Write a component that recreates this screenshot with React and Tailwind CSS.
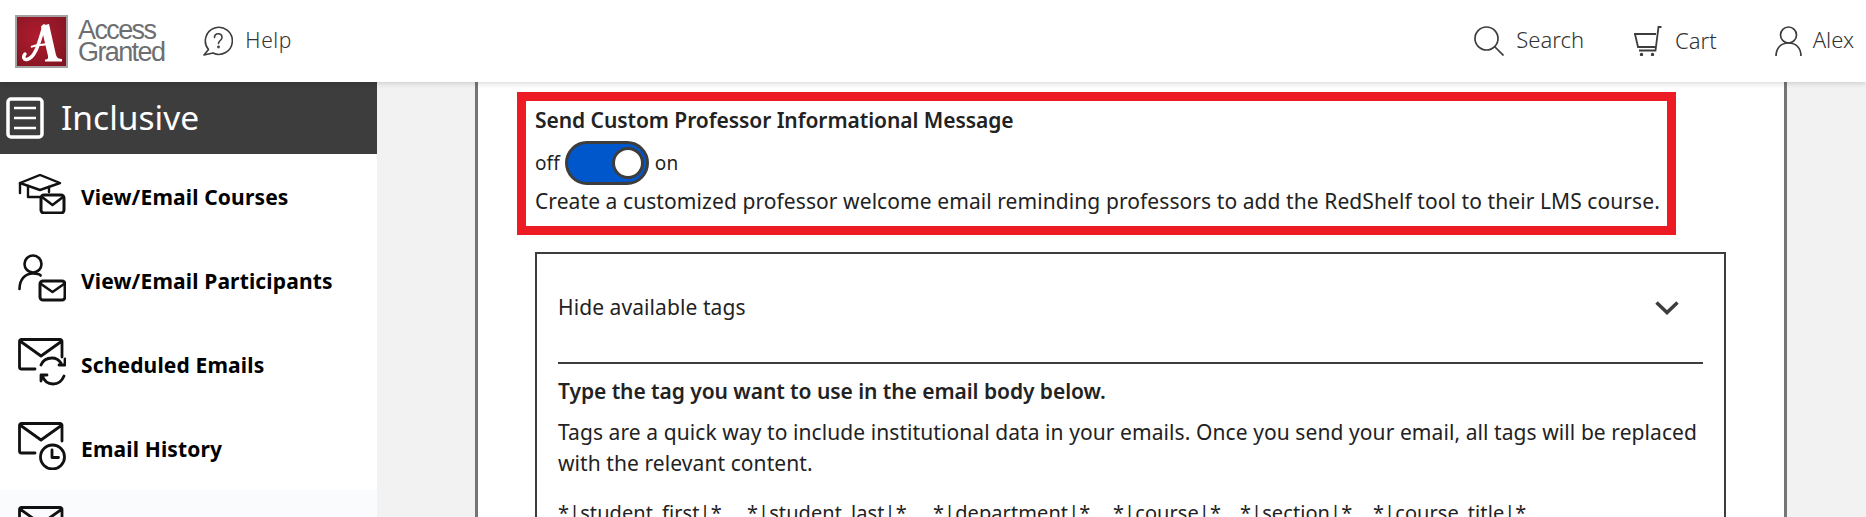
import React from "react";

const font = "font-['Noto_Sans',sans-serif]";

const MailShape = () => (
  <path d="M44 19V3.500a2 2 0 0 0-2-2H3.500a2 2 0 0 0-2 2V29a2 2 0 0 0 2 2H17M2 3l21 15L44 3" />
);

const CoursesIcon = () => (
  <svg viewBox="0 0 48 40" className="h-[40px] w-[48px]" fill="none" stroke="#111" strokeWidth="2.400" strokeLinejoin="round" strokeLinecap="round">
    <path d="M2 9 22 1l20 8-20 7z" />
    <path d="M2 9v10M10 12v11h12M31 13v5" />
    <rect x="23" y="21" width="23" height="18" rx="3" strokeWidth="3" />
    <path d="m24 23 10.500 8L45 23" strokeWidth="2.600" />
  </svg>
);

const ParticipantsIcon = () => (
  <svg viewBox="0 0 48 48" className="h-[48px] w-[48px]" fill="none" stroke="#111" strokeWidth="2.600" strokeLinecap="round" strokeLinejoin="round">
    <circle cx="15" cy="10" r="8.500" />
    <path d="M1.500 35c0-9 5-15.500 13.500-15.500 5 0 8 1.500 7.500 2" />
    <rect x="22" y="27" width="25" height="19" rx="3" strokeWidth="3" />
    <path d="m23 30 11.500 8L46 30" />
  </svg>
);

const ScheduledIcon = () => (
  <svg viewBox="0 0 48 48" className="h-[48px] w-[48px]" fill="none" stroke="#111" strokeWidth="2.800" strokeLinecap="round" strokeLinejoin="round">
    <MailShape />
    <path d="M23 27c2-5 6-7 11-7 4 0 7 2 9 5M47 21v6h-6M24 37c2 6 6 9 11 9 5 0 9-3 11-8M23 43v-6h6" />
  </svg>
);

const HistoryIcon = () => (
  <svg viewBox="0 0 48 48" className="h-[48px] w-[48px]" fill="none" stroke="#111" strokeWidth="2.800" strokeLinecap="round" strokeLinejoin="round">
    <MailShape />
    <circle cx="34.500" cy="35" r="12" fill="#fff" />
    <path d="M34 28v7.500h6.500" />
  </svg>
);

const PlainMailIcon = () => (
  <svg viewBox="0 0 48 48" className="h-[48px] w-[48px]" fill="none" stroke="#111" strokeWidth="2.800" strokeLinecap="round" strokeLinejoin="round">
    <MailShape />
  </svg>
);

const navItems = [
  { label: "View/Email Courses", icon: <CoursesIcon />, pad: "pt-[20px]", text: "mt-[3px]" },
  { label: "View/Email Participants", icon: <ParticipantsIcon />, pad: "pt-[16px]", text: "mt-[7px]" },
  { label: "Scheduled Emails", icon: <ScheduledIcon />, pad: "pt-[16px]", text: "mt-[7px]" },
  { label: "Email History", icon: <HistoryIcon />, pad: "pt-[16px]", text: "mt-[7px]" },
];

const tags = [
  { label: "*|student_first|*", width: "w-[189px]" },
  { label: "*|student_last|*", width: "w-[186px]" },
  { label: "*|department|*", width: "w-[180px]" },
  { label: "*|course|*", width: "w-[127px]" },
  { label: "*|section|*", width: "w-[133px]" },
  { label: "*|course_title|*", width: "w-[180px]" },
];

export default function App() {
  return (
    <div className={`h-[517px] overflow-hidden bg-white ${font}`}>
      {/* Top bar */}
      <header className="relative z-10 flex h-[82px] items-center justify-between bg-white pl-[15px] pr-[12px] shadow-[0_1px_6px_rgba(0,0,0,0.18)]">
        <div className="flex items-center">
          <div className="h-[53px] w-[53px] border-2 border-[#a3a3a3] bg-[radial-gradient(circle_at_40%_40%,#b01c2e,#7d1420)]">
            <svg viewBox="0 0 49 49" className="h-[49px] w-[49px]">
              <path d="M24 9l8-2 7 31c1 3 3 4 6 4v2.500H28v-2c2 0 3.500-.5 3-3.500z" fill="#fff" />
              <path d="M27 9C23 22 19 41 10 42.500 7 43 5.500 40 8 37" fill="none" stroke="#fff" strokeWidth="3.500" strokeLinecap="round" />
              <path d="M14 30c6-3 13-1 19-4" fill="none" stroke="#fff" strokeWidth="2" />
            </svg>
          </div>
          <div className="ml-[10px] font-['Liberation_Sans',sans-serif] text-[27px] leading-[22px] tracking-[-1.600px] text-[#6d6e71]">
            <div>Access</div>
            <div>Granted</div>
          </div>
          <svg viewBox="0 0 30 30" className="ml-[39px] h-[30px] w-[30px]" fill="none" stroke="#3d3d3d" strokeWidth="1.600">
            <path d="M1 29l4.500-5.500A13.500 13.500 0 1 1 10 27z" strokeLinejoin="round" />
            <path d="M11.500 11.500c0-5 7.500-5 7.500 0 0 3-3.500 3-3.500 6" strokeLinecap="round" />
            <circle cx="15.500" cy="21" r=".6" />
          </svg>
          <span className="ml-[12px] text-[21px] font-light tracking-[0.6px] text-[#333]">Help</span>
        </div>
        <div className="flex items-center text-[22px] font-light text-[#333]">
          <svg viewBox="0 0 30 30" className="h-[30px] w-[30px]" fill="none" stroke="#3d3d3d" strokeWidth="1.700">
            <circle cx="12.500" cy="12.500" r="11.500" />
            <path d="m20.500 20.500 9 9" />
          </svg>
          <span className="-mt-[4px] ml-[12px]">Search</span>
          <svg viewBox="0 0 28 30" className="ml-[50px] h-[30px] w-[28px]" fill="none" stroke="#3d3d3d" strokeWidth="1.800">
            <path d="M0 8h22M1 8l3 13h18.500M27.500 1H24.500L21.500 24.500H5" />
            <circle cx="7.500" cy="28.500" r=".8" />
            <circle cx="18.500" cy="28.500" r=".8" />
          </svg>
          <span className="-mt-[2px] ml-[13px]">Cart</span>
          <svg viewBox="0 0 27 30" className="ml-[58px] h-[30px] w-[27px]" fill="none" stroke="#3d3d3d" strokeWidth="1.700">
            <circle cx="13.500" cy="9" r="8" />
            <path d="M1 30c0-8 5-13 12.500-13S26 22 26 30" />
          </svg>
          <span className="-mt-[4px] ml-[11px]">Alex</span>
        </div>
      </header>

      <div className="flex h-[435px]">
        {/* Sidebar */}
        <aside className="w-[377px] shrink-0 bg-white">
          <div className="flex h-[72px] items-center bg-[#3d3d3d] pl-[6px] text-white">
            <svg viewBox="0 0 38 42" className="h-[42px] w-[38px]" fill="none" stroke="#fff">
              <rect x="2" y="2" width="34" height="38" rx="3" strokeWidth="3.500" />
              <path d="M8 11h22M8 21h22M8 31h22" strokeWidth="2.500" />
            </svg>
            <span className="ml-[17px] text-[33.500px] leading-none">Inclusive</span>
          </div>
          {navItems.map((item) => (
            <div key={item.label} className={`flex h-[84px] pl-[18px] ${item.pad}`}>
              <div className="w-[63px] shrink-0">{item.icon}</div>
              <span className={`${item.text} text-[21px] font-bold leading-[40px] tracking-[0.15px] text-black`}>{item.label}</span>
            </div>
          ))}
          <div className="h-[84px] bg-[#fafbfd] pl-[18px] pt-[16px]">
            <PlainMailIcon />
          </div>
        </aside>

        {/* Main */}
        <main className="flex-1 bg-[#f2f2f2] pl-[98px]">
          <div className="h-full w-[1312px] border-x-[3px] border-[#757575] bg-white pl-[39px] pt-[10px] text-[21px] tracking-[0.08px] text-[#222]">
            <section className="h-[143px] w-[1159px] border-[9px] border-[#ed1c24] pl-[9px] pt-[5px]">
              <h2 className="text-[21px] font-semibold leading-[28px] tracking-[-0.06px]">Send Custom Professor Informational Message</h2>
              <div className="mt-[7px] flex h-[44px] items-center text-[19px]">
                <span>off</span>
                <div className="ml-[5px] mr-[6px] flex h-[44px] w-[84px] items-center justify-end rounded-full border-[3px] border-[#3d3d3d] bg-[#0057cc] pr-[2px]">
                  <div className="h-[32px] w-[32px] rounded-full border-[3px] border-[#3d3d3d] bg-white" />
                </div>
                <span>on</span>
              </div>
              <p className="mt-[2px] whitespace-nowrap leading-[28px]">
                Create a customized professor welcome email reminding professors to add the RedShelf tool to their LMS course.
              </p>
            </section>

            <section className="ml-[18px] mt-[17px] h-[400px] w-[1191px] border-2 border-[#3d3d3d] px-[21px]">
              <div className="flex h-[110px] items-center justify-between border-b-2 border-[#3d3d3d] pr-[24px]">
                <span>Hide available tags</span>
                <svg viewBox="0 0 24 14" className="h-[14px] w-[24px]" fill="none" stroke="#3d3d3d" strokeWidth="3.500">
                  <path d="m1.500 1.500 10.500 10 10.500-10" />
                </svg>
              </div>
              <p className="mt-[13px] font-semibold leading-[28px] tracking-[-0.06px]">Type the tag you want to use in the email body below.</p>
              <p className="mt-[12px] leading-[31px]">
                Tags are a quick way to include institutional data in your emails. Once you send your email, all tags will be replaced with the relevant content.
              </p>
              <div className="mt-[20px] flex text-[20px] leading-[28px]">
                {tags.map((tag) => (
                  <span key={tag.label} className={`${tag.width} shrink-0`}>{tag.label}</span>
                ))}
              </div>
            </section>
          </div>
        </main>
      </div>
    </div>
  );
}
